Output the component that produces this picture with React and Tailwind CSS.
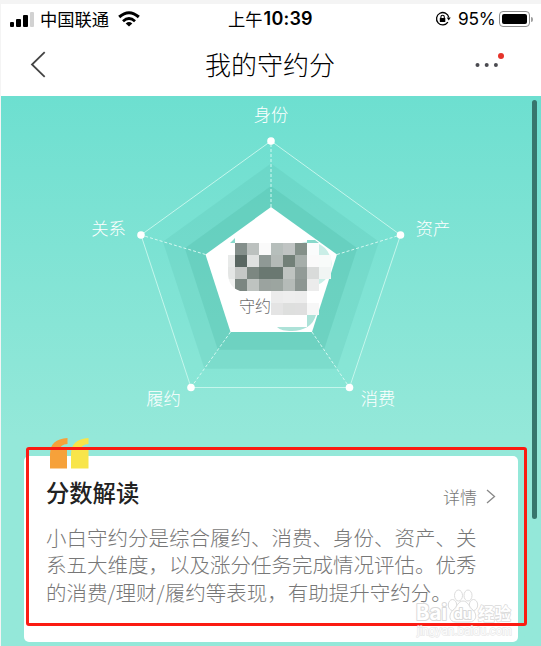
const axes = [
  { label: '身份', x: 271, y: 121 },
  { label: '资产', x: 433, y: 235 },
  { label: '消费', x: 378, y: 405 },
  { label: '履约', x: 163.5, y: 405 },
  { label: '关系', x: 108.5, y: 235 },
]

const outer = [[271, 141], [400.5, 235], [349.5, 387.5], [191, 387.5], [141, 235]]
const inner = [[271, 207], [337, 254.5], [312, 332], [230.5, 332], [205.5, 254.5]]

// blend of the inner and outer pentagon, 0 = inner, 1 = outer
const ring = (t) => inner.map(([x, y], i) => [x + (outer[i][0] - x) * t, y + (outer[i][1] - y) * t])
const toPoints = (list) => list.map((p) => p.join(',')).join(' ')

const mosaic = [
  [null, '#848f8b', '#bcc1bf', '#fafafa', '#b6bebb', '#c0c4c3', '#849089', '#fafcfc'],
  ['#e8eae9', '#5a6762', '#dfe1e0', '#8f9995', '#b4bab7', '#728078', '#a6aeaa', '#fafafa', null],
  ['#e4e6e5', '#c5c8c6', '#7c8781', '#6a7871', '#6a7871', '#bfc4c1', '#929b97', '#d9dbda', '#f1f5f4'],
  ['#f1f2f1', '#7b8681', '#bec3c0', '#9ba39f', '#9ca5a0', '#b5bbb8', '#8d9692', '#ececec'],
  [null, null, null, null, '#ececec', '#eeeeee', '#ededed', '#ffffff'],
  [null, null, null, null, '#e4e4e4', '#dedfde', '#dfdfdf', '#f7f7f7'],
]

function StatusBar() {
  return (
    <div className="flex h-[30px] items-center pl-[9px] pr-[8px] text-black">
      <div className="flex h-[15px] w-[24px] items-end gap-[2px]">
        <span className="h-[5px] w-[4px] rounded-[1px] bg-black" />
        <span className="h-[8px] w-[5px] rounded-[1px] bg-black" />
        <span className="h-[12px] w-[5px] rounded-[1px] bg-black" />
        <span className="h-[15px] w-[4px] rounded-[1px] bg-[#d2d2d2]" />
      </div>
      <span className="ml-[6px] w-[70px] whitespace-nowrap text-[17.3px] leading-none">中国联通</span>
      <svg className="ml-[8px] h-[16px] w-[22px]" viewBox="0 0 22 16" fill="none" stroke="#000" strokeWidth="3">
        <path d="M1.2 6Q11-2.6 20.8 6" />
        <path d="M5 10.2Q11 4.8 17 10.2" strokeWidth="2.8" />
        <path d="M7.7 12.4Q11 9.8 14.3 12.4L11 15.6z" fill="#000" stroke="none" />
      </svg>
      <span className="ml-[88px] flex w-[87px] items-center whitespace-nowrap text-[17.3px] leading-none">
        上午
        <span className="ml-[1px] font-[Inter] text-[18px] font-semibold tracking-[0.2px]">10:39</span>
      </span>
      <svg className="ml-[120px] h-[16px] w-[16px]" viewBox="0 0 16 16" fill="none" stroke="#000" strokeWidth="1.3">
        <path d="M12.9 11.2A6.2 6.2 0 1 1 13.8 6.4" />
        <path d="M11.7 6.6h4l-2 2.8z" fill="#000" stroke="none" />
        <rect x="4.8" y="7" width="5.5" height="4" rx="0.5" fill="#000" stroke="none" />
        <path d="M5.9 7.2V6a1.7 1.7 0 0 1 3.4 0v1.2" strokeWidth="1.1" />
      </svg>
      <span className="ml-[7px] w-[39px] font-[Inter] text-[17.3px] leading-none tracking-[-0.2px]">95%</span>
      <div className="ml-[2px] flex h-[16px] w-[31px] shrink-0 rounded-[4px] border border-[#8e8e8e] p-[2px]">
        <span className="w-[25px] rounded-[2px] bg-black" />
      </div>
      <span className="ml-[1px] h-[5px] w-[2px] shrink-0 rounded-r bg-[#a0a0a0]" />
    </div>
  )
}

function NavBar() {
  return (
    <div className="grid h-[62px] grid-cols-[1fr_auto_1fr] items-center pb-[3px]">
      <svg className="ml-[29px] mt-[1px] h-[27px] w-[17px]" viewBox="0 0 17 27" fill="none" stroke="#444" strokeWidth="1.8">
        <path d="M14.7 1.2L2 13.5l12.7 12.3" />
      </svg>
      <h1 className="mr-[2px] text-[26px] font-light leading-none text-black">我的守约分</h1>
      <svg className="mr-[36px] h-[24px] w-[32px] justify-self-end" viewBox="0 0 32 24">
        <circle cx="4.5" cy="13" r="2" fill="#4a4a50" />
        <circle cx="13.7" cy="13" r="2" fill="#4a4a50" />
        <circle cx="22.9" cy="13" r="2" fill="#4a4a50" />
        <circle cx="28" cy="4" r="3" fill="#e5332a" />
      </svg>
    </div>
  )
}

function ScoreRadar() {
  return (
    <svg className="block h-[360px] w-[540px]" viewBox="1 96 540 360">
      <defs>
        <clipPath id="core">
          <polygon points={toPoints(inner)} />
        </clipPath>
        <clipPath id="blur">
          <path d="M235 243h96v48h-12v36h-50v-36h-29q-12-4-12-18v-18h7z" />
        </clipPath>
      </defs>
      <polygon points={toPoints(outer)} fill="#5fdccb" fillOpacity="0.12" stroke="#c4f6ec" strokeWidth="1" />
      <polygon points={toPoints(ring(0.66))} fill="#4bb9a6" fillOpacity="0.18" />
      <polygon points={toPoints(ring(0.32))} fill="#4bb4a3" fillOpacity="0.26" />
      {outer.map(([x, y], i) => (
        <line key={i} x1={inner[i][0]} y1={inner[i][1]} x2={x} y2={y} stroke="#d3f8f1" strokeWidth="1" strokeDasharray="3 2" />
      ))}
      <polygon points={toPoints(inner)} fill="#fff" />
      <g clipPath="url(#core)">
        <circle cx="309" cy="264" r="22.5" fill="#caeee7" />
        <path d="M277 327h30v-12h9c-3 11-13 16-24 16-7 0-12-1-15-4z" fill="#ade2d8" />
        <path d="M230 243l5-5v5zM307 240h8l4 3h-12z" fill="#88d9cb" />
        <path d="M307 243h12v12h12v12h-12v12h-12z" fill="#f8fbfa" />
      </g>
      <text x="239" y="312" fontSize="16" fill="#6b6b6b" className="font-light">守约</text>
      <g clipPath="url(#blur)" shapeRendering="crispEdges">
        {mosaic.map((row, r) =>
          row.map((color, c) => color && <rect key={`${r}-${c}`} x={223 + c * 12} y={243 + r * 12} width="12" height="12" fill={color} />)
        )}
      </g>
      {outer.map(([x, y], i) => (
        <circle key={i} cx={x} cy={y} r="3.8" fill="#fff" />
      ))}
      {axes.map((axis) => (
        <text key={axis.label} x={axis.x} y={axis.y} fontSize="17.3" textAnchor="middle" fill="#fff" className="font-light">
          {axis.label}
        </text>
      ))}
    </svg>
  )
}

function ScoreCard() {
  return (
    <section className="relative ml-[23px] h-[186px] w-[494px] rounded-[5px] bg-white px-[22px] pt-[22px]">
      <svg className="absolute left-[25px] top-[-18px] h-[31px] w-[41px]" viewBox="0 0 41 31">
        <path d="M1 30.5V16Q1 1 18.5 0v6Q11 6.5 11 11.5H18V30.5Z" fill="#f6a13a" />
        <path d="M22 30.5V16Q22 1 39.5 0v6Q32 6.5 32 11.5H39.5V30.5Z" fill="#f8e54a" />
      </svg>
      <div className="flex h-[30px] items-center justify-between">
        <h2 className="text-[23.3px] font-medium leading-none text-[#222]">分数解读</h2>
        <span className="mt-[6px] flex items-center text-[17px] font-light leading-none text-[#777]">
          详情
          <svg className="ml-[9px] h-[15px] w-[10px]" viewBox="0 0 10 15" fill="none" stroke="#888" strokeWidth="1.3">
            <path d="M1 1l7.5 6.5L1 14" />
          </svg>
        </span>
      </div>
      <p className="mt-[16px] whitespace-nowrap text-[20.5px] font-light leading-[27.4px] text-[#777]">
        小白守约分是综合履约、消费、身份、资产、关
        <br />
        系五大维度，以及涨分任务完成情况评估。优秀
        <br />
        的消费/理财/履约等表现，有助提升守约分。
      </p>
    </section>
  )
}

function Watermark() {
  return (
    <svg className="absolute left-[414px] top-[583px] h-[56px] w-[105px]" viewBox="0 0 105 56">
      <g fill="#fff" fillOpacity="0.6" stroke="#dcdcdc" strokeWidth="1">
        <ellipse cx="37.5" cy="18" rx="4.2" ry="5.5" />
        <ellipse cx="43.5" cy="8.5" rx="4" ry="5.5" />
        <ellipse cx="53" cy="8.5" rx="4" ry="5.5" />
        <ellipse cx="58.5" cy="18" rx="4.2" ry="5.5" />
        <path d="M48 14c5 0 6 6 10 9 5 5 3 12-4 12H41c-7 0-8-7-3-12 4-3 5-9 10-9z" />
      </g>
      <g fill="#fff" stroke="#d9d9d9" strokeWidth="2" paintOrder="stroke" strokeLinejoin="round" fontWeight="700">
        <text x="1" y="33" fontSize="21" className="font-[Inter]" textLength="31" lengthAdjust="spacingAndGlyphs">Bai</text>
        <text x="39" y="32" fontSize="14" className="font-[Inter]">du</text>
        <text x="63" y="33" fontSize="16.5" strokeWidth="1.4">经验</text>
      </g>
      <text x="2" y="47.5" fontSize="11" fill="#fff" fillOpacity="0.9" stroke="#e0e0e0" strokeOpacity="0.7" strokeWidth="1.4" paintOrder="stroke" textLength="95" className="font-[Inter]">
        jingyan.baidu.com
      </text>
    </svg>
  )
}

export default function App() {
  return (
    <div className="relative h-[646px] w-[541px] overflow-hidden border-t-[4px] border-l border-t-[#f4f4f4] border-l-[#f4f4f4] bg-white font-['Noto_Sans_CJK_SC',sans-serif]">
      <StatusBar />
      <NavBar />
      <main className="h-[550px] bg-linear-to-b from-[#6ddfd0] from-0% via-[#94e8d9] via-62% to-[#94e8d9]">
        <ScoreRadar />
        <ScoreCard />
      </main>
      <span className="absolute left-[531px] top-[96px] h-[419px] w-[5px] rounded-full bg-[#37766d]" />
      <div className="absolute left-[25px] top-[443px] h-[179px] w-[501px] rounded-[3px] border-[3px] border-[#fb1b12]" />
      <Watermark />
    </div>
  )
}
